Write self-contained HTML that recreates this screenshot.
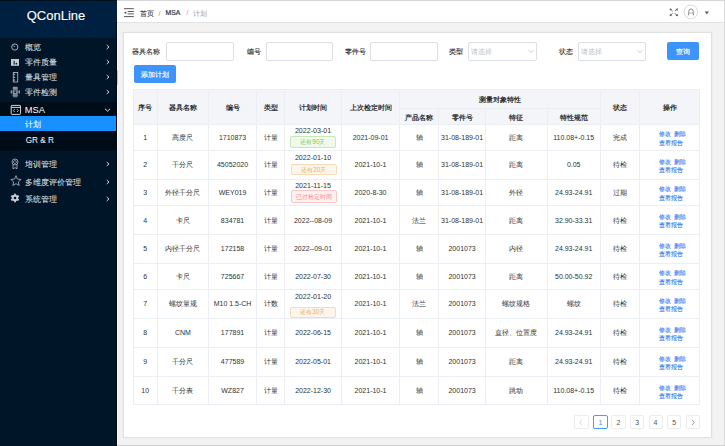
<!DOCTYPE html><html><head><meta charset="utf-8"><title>QConLine</title><style>
html,body{margin:0;padding:0;}
body{width:725px;height:446px;overflow:hidden;position:relative;background:#f2f2f2;font-family:"Liberation Sans", sans-serif;}
</style></head><body>
<div style="position:absolute;left:0px;top:0px;width:117px;height:446px;background:#011529;"></div>
<div style="position:absolute;left:0px;top:0px;width:117px;height:37.5px;background:#002041;"></div>
<div style="position:absolute;left:-94px;top:8.7px;width:300px;text-align:center;font-size:13.0px;line-height:13.0px;color:#ffffff;font-weight:normal;white-space:nowrap;letter-spacing:0px;-webkit-text-stroke:0.12px #fff;">QConLine</div>
<div style="position:absolute;left:24.6px;top:44.4px;font-size:8.1px;line-height:8.1px;color:#d3d7dc;font-weight:normal;white-space:nowrap;-webkit-text-stroke:0.1px #d3d7dc">概览</div>
<svg style="position:absolute;left:105px;top:44.3px" width="6" height="6" viewBox="0 0 6 6"><path d="M1.7 1 L4 3 L1.7 5" fill="none" stroke="#d3d7dc" stroke-width="0.95"/></svg>
<div style="position:absolute;left:24.6px;top:59.4px;font-size:8.1px;line-height:8.1px;color:#d3d7dc;font-weight:normal;white-space:nowrap;-webkit-text-stroke:0.1px #d3d7dc">零件质量</div>
<svg style="position:absolute;left:105px;top:59.3px" width="6" height="6" viewBox="0 0 6 6"><path d="M1.7 1 L4 3 L1.7 5" fill="none" stroke="#d3d7dc" stroke-width="0.95"/></svg>
<div style="position:absolute;left:24.6px;top:74.00000000000001px;font-size:8.1px;line-height:8.1px;color:#d3d7dc;font-weight:normal;white-space:nowrap;-webkit-text-stroke:0.1px #d3d7dc">量具管理</div>
<svg style="position:absolute;left:105px;top:73.9px" width="6" height="6" viewBox="0 0 6 6"><path d="M1.7 1 L4 3 L1.7 5" fill="none" stroke="#d3d7dc" stroke-width="0.95"/></svg>
<div style="position:absolute;left:24.6px;top:89.2px;font-size:8.1px;line-height:8.1px;color:#d3d7dc;font-weight:normal;white-space:nowrap;-webkit-text-stroke:0.1px #d3d7dc">零件检测</div>
<svg style="position:absolute;left:105px;top:89.1px" width="6" height="6" viewBox="0 0 6 6"><path d="M1.7 1 L4 3 L1.7 5" fill="none" stroke="#d3d7dc" stroke-width="0.95"/></svg>
<div style="position:absolute;left:0px;top:101.8px;width:117px;height:49.5px;background:#000c17;"></div>
<div style="position:absolute;left:24.8px;top:105.74999999999999px;font-size:9.3px;line-height:9.3px;color:#ffffff;font-weight:normal;white-space:nowrap;">MSA</div>
<svg style="position:absolute;left:104px;top:107px" width="7" height="6" viewBox="0 0 7 6"><path d="M1 1.8 L3.5 4.2 L6 1.8" fill="none" stroke="#ffffff" stroke-width="0.9"/></svg>
<div style="position:absolute;left:0px;top:116px;width:117px;height:14.6px;background:#1890ff;"></div>
<div style="position:absolute;left:24.6px;top:121.30000000000001px;font-size:8.1px;line-height:8.1px;color:#ffffff;font-weight:normal;white-space:nowrap;-webkit-text-stroke:0.08px #fff">计划</div>
<div style="position:absolute;left:25.7px;top:136.5px;font-size:8.2px;line-height:8.2px;color:#ffffff;font-weight:normal;white-space:nowrap;">GR &amp; R</div>
<div style="position:absolute;left:24.8px;top:161.1px;font-size:8.1px;line-height:8.1px;color:#d3d7dc;font-weight:normal;white-space:nowrap;-webkit-text-stroke:0.1px #d3d7dc">培训管理</div>
<svg style="position:absolute;left:105px;top:161.2px" width="6" height="6" viewBox="0 0 6 6"><path d="M1.7 1 L4 3 L1.7 5" fill="none" stroke="#d3d7dc" stroke-width="0.95"/></svg>
<div style="position:absolute;left:24.8px;top:178.5px;font-size:8.1px;line-height:8.1px;color:#d3d7dc;font-weight:normal;white-space:nowrap;-webkit-text-stroke:0.1px #d3d7dc">多维度评价管理</div>
<svg style="position:absolute;left:105px;top:178.6px" width="6" height="6" viewBox="0 0 6 6"><path d="M1.7 1 L4 3 L1.7 5" fill="none" stroke="#d3d7dc" stroke-width="0.95"/></svg>
<div style="position:absolute;left:24.8px;top:195.5px;font-size:8.1px;line-height:8.1px;color:#d3d7dc;font-weight:normal;white-space:nowrap;-webkit-text-stroke:0.1px #d3d7dc">系统管理</div>
<svg style="position:absolute;left:105px;top:195.6px" width="6" height="6" viewBox="0 0 6 6"><path d="M1.7 1 L4 3 L1.7 5" fill="none" stroke="#d3d7dc" stroke-width="0.95"/></svg>
<svg style="position:absolute;left:10px;top:42px" width="10" height="10" viewBox="0 0 10 10"><circle cx="4.8" cy="5" r="3.1" fill="none" stroke="#b8bec6" stroke-width="0.9"/><path d="M4.8 5 L3.2 3.4" stroke="#b8bec6" stroke-width="0.9"/></svg>
<svg style="position:absolute;left:11px;top:58.8px" width="8" height="7" viewBox="0 0 8 7"><rect x="0" y="0" width="8" height="6.8" fill="#c6cbd2"/><path d="M2.6 1.6 Q3.8 1.2 3.9 2.6 L4 5.6 H2.2 Z" fill="#4a5360"/><circle cx="5.4" cy="4.7" r="0.9" fill="#1c2430"/></svg>
<svg style="position:absolute;left:12px;top:71px" width="7" height="12" viewBox="0 0 7 12"><rect x="1.3" y="1.5" width="4.4" height="9.5" fill="none" stroke="#aab1ba" stroke-width="0.9"/><path d="M1.7 2.2 L3.4 3.3 L1.7 4.4 Z M1.7 5.1 L3.4 6.2 L1.7 7.3 Z M1.7 8 L3.4 9.1 L1.7 10.2 Z" fill="#aab1ba"/></svg>
<svg style="position:absolute;left:10px;top:86px" width="11" height="12" viewBox="0 0 11 12"><g fill="#8a939e"><rect x="2.7" y="0.8" width="5" height="2.6" rx="0.6"/><rect x="2.7" y="3.4" width="5" height="5.4"/><rect x="0.6" y="4.2" width="1.6" height="3.2" rx="0.5"/><rect x="8.4" y="4.2" width="1.6" height="3.2" rx="0.5"/><rect x="2.5" y="8.9" width="5.4" height="1" /><rect x="3" y="10.2" width="4.5" height="1" /></g><circle cx="5.2" cy="6.2" r="0.9" fill="#011529"/><rect x="3.7" y="4" width="3" height="0.7" fill="#3b4552"/></svg>
<svg style="position:absolute;left:10px;top:104px" width="12" height="12" viewBox="0 0 12 12"><rect x="1.2" y="1.4" width="9.3" height="9.0" rx="0.6" fill="none" stroke="#e6e6e6" stroke-width="0.9"/><path d="M1.2 3.4 H10.5" stroke="#e6e6e6" stroke-width="0.9"/><path d="M4.7 5.2 L3.4 6.6 L4.7 8 M7 5.2 L8.3 6.6 L7 8" fill="none" stroke="#e6e6e6" stroke-width="0.8"/></svg>
<svg style="position:absolute;left:11px;top:158px" width="8" height="12" viewBox="0 0 8 12"><circle cx="4" cy="4" r="3" fill="none" stroke="#b8bec6" stroke-width="0.8"/><circle cx="4" cy="4" r="1.5" fill="none" stroke="#b8bec6" stroke-width="0.6"/><path d="M2 6.5 V10.8 L4 9.6 L6 10.8 V6.5" fill="none" stroke="#b8bec6" stroke-width="0.8"/></svg>
<svg style="position:absolute;left:9.7px;top:175.3px" width="12" height="12" viewBox="0 0 12 12"><path d="M6.00 0.70 L7.47 4.08 L11.14 4.43 L8.38 6.87 L9.17 10.47 L6.00 8.60 L2.83 10.47 L3.62 6.87 L0.86 4.43 L4.53 4.08 Z" fill="none" stroke="#b8bec6" stroke-width="0.8" stroke-linejoin="round"/></svg>
<svg style="position:absolute;left:10px;top:193px" width="10" height="10" viewBox="0 0 10 10"><g fill="#c8cdd3"><circle cx="5" cy="5" r="3.2"/><rect x="4.1" y="0.7" width="1.8" height="8.6"/><rect x="4.1" y="0.7" width="1.8" height="8.6" transform="rotate(60 5 5)"/><rect x="4.1" y="0.7" width="1.8" height="8.6" transform="rotate(120 5 5)"/></g><circle cx="5" cy="5" r="1.3" fill="#011529"/></svg>
<div style="position:absolute;left:116px;top:22px;width:1px;height:424px;background:#000a16;"></div>
<div style="position:absolute;left:117px;top:22px;width:1px;height:424px;background:#fafafa;"></div>
<div style="position:absolute;left:117px;top:69.8px;width:1.2px;height:14.8px;background:#9cd3ff;"></div>
<div style="position:absolute;left:117px;top:0px;width:608px;height:22px;background:#ffffff;border-bottom:1px solid #e2e2e2;box-sizing:border-box;height:23px;"></div>
<svg style="position:absolute;left:123px;top:7px" width="12" height="11" viewBox="0 0 12 11"><g stroke="#444" stroke-width="0.9"><path d="M1 1.7 H10.8"/><path d="M4.7 4.5 H10.8"/><path d="M4.7 6.9 H10.8"/><path d="M1 9.6 H10.8"/></g><path d="M1 5.7 L3.3 4.4 V7 Z" fill="#444"/></svg>
<div style="position:absolute;left:140px;top:9.65px;font-size:7.3px;line-height:7.3px;color:#303133;font-weight:normal;white-space:nowrap;-webkit-text-stroke:0.1px #303133">首页</div>
<div style="position:absolute;left:158.2px;top:9.75px;font-size:8px;line-height:8px;color:#999;font-weight:normal;white-space:nowrap;">/</div>
<div style="position:absolute;left:165.5px;top:10.05px;font-size:6.8px;line-height:6.8px;color:#303133;font-weight:normal;white-space:nowrap;-webkit-text-stroke:0.2px #303133">MSA</div>
<div style="position:absolute;left:186.3px;top:9.35px;font-size:8px;line-height:8px;color:#aaa;font-weight:normal;white-space:nowrap;">/</div>
<div style="position:absolute;left:192.6px;top:9.65px;font-size:7.3px;line-height:7.3px;color:#999;font-weight:normal;white-space:nowrap;">计划</div>
<svg style="position:absolute;left:667px;top:6px" width="14" height="12" viewBox="0 0 14 12"><g stroke="#5a5a5a" stroke-width="0.9" fill="none" stroke-linecap="round"><path d="M3.3 3.1 L5.4 4.9"/><path d="M10.2 3.1 L8.2 4.9"/><path d="M3.4 9.6 L5.4 7.6"/><path d="M10.1 9.5 L8.2 7.6"/></g><g fill="#5a5a5a"><path d="M2.6 2.5 L5 2.9 L3 4.8 Z"/><path d="M10.9 2.5 L8.5 2.9 L10.5 4.8 Z"/><path d="M2.6 10.2 L3 7.8 L5 9.8 Z"/><path d="M10.9 10.2 L10.5 7.8 L8.5 9.8 Z"/></g></svg>
<svg style="position:absolute;left:683px;top:4px" width="16" height="16" viewBox="0 0 16 16"><circle cx="7.9" cy="7.9" r="6.8" fill="#fff" stroke="#c9c9c9" stroke-width="0.7"/><path d="M5.3 11.4 L5.8 9.1 V7.2 A2.2 2.2 0 0 1 10.2 7.2 V9.1 L10.7 11.4" fill="none" stroke="#666" stroke-width="0.75"/><path d="M5.8 9.1 H10.2" stroke="#888" stroke-width="0.6"/></svg>
<svg style="position:absolute;left:704px;top:10.5px" width="6" height="4" viewBox="0 0 6 4"><path d="M0.7 0.6 H5 L2.85 3.3 Z" fill="#555"/></svg>
<div style="position:absolute;left:117px;top:0px;width:608px;height:1px;background:#d6d6d6;"></div>
<div style="position:absolute;left:0px;top:0px;width:117px;height:1px;background:#000d1a;"></div>
<div style="position:absolute;left:724px;top:0px;width:1px;height:446px;background:#dadada;"></div>
<div style="position:absolute;left:117px;top:445px;width:608px;height:1px;background:#d0d0d0;"></div>
<div style="position:absolute;left:123px;top:32px;width:588.5px;height:405.5px;background:#fff;border:1px solid #e0e0e0;box-sizing:border-box;box-shadow:0 0 1px rgba(0,0,0,0.08);"></div>
<div style="position:absolute;left:132.4px;top:48.2px;font-size:7px;line-height:7px;color:#303133;font-weight:normal;white-space:nowrap;-webkit-text-stroke:0.12px #303133">器具名称</div>
<div style="position:absolute;left:166px;top:42.4px;width:68.2px;height:18.2px;border:1px solid #dcdfe6;border-radius:2px;box-sizing:border-box;background:#fff;"></div>
<div style="position:absolute;left:246.8px;top:48.2px;font-size:7px;line-height:7px;color:#303133;font-weight:normal;white-space:nowrap;-webkit-text-stroke:0.12px #303133">编号</div>
<div style="position:absolute;left:265.5px;top:42.4px;width:67.8px;height:18.2px;border:1px solid #dcdfe6;border-radius:2px;box-sizing:border-box;background:#fff;"></div>
<div style="position:absolute;left:345.4px;top:48.2px;font-size:7px;line-height:7px;color:#303133;font-weight:normal;white-space:nowrap;-webkit-text-stroke:0.12px #303133">零件号</div>
<div style="position:absolute;left:370.4px;top:42.4px;width:68px;height:18.2px;border:1px solid #dcdfe6;border-radius:2px;box-sizing:border-box;background:#fff;"></div>
<div style="position:absolute;left:448.6px;top:48.2px;font-size:7px;line-height:7px;color:#303133;font-weight:normal;white-space:nowrap;-webkit-text-stroke:0.12px #303133">类型</div>
<div style="position:absolute;left:468.2px;top:42.4px;width:68.5px;height:18.2px;border:1px solid #dcdfe6;border-radius:2px;box-sizing:border-box;background:#fff;"></div>
<div style="position:absolute;left:471.2px;top:48.0px;font-size:7px;line-height:7px;color:#b8bcc4;font-weight:normal;white-space:nowrap;">请选择</div>
<svg style="position:absolute;left:527.7px;top:49px" width="6" height="5" viewBox="0 0 6 5"><path d="M0.6 1 L3 3.6 L5.4 1" fill="none" stroke="#b8bcc4" stroke-width="0.7"/></svg>
<div style="position:absolute;left:558.8px;top:48.2px;font-size:7px;line-height:7px;color:#303133;font-weight:normal;white-space:nowrap;-webkit-text-stroke:0.12px #303133">状态</div>
<div style="position:absolute;left:578.2px;top:42.4px;width:68.2px;height:18.2px;border:1px solid #dcdfe6;border-radius:2px;box-sizing:border-box;background:#fff;"></div>
<div style="position:absolute;left:581.2px;top:48.0px;font-size:7px;line-height:7px;color:#b8bcc4;font-weight:normal;white-space:nowrap;">请选择</div>
<svg style="position:absolute;left:637.4000000000001px;top:49px" width="6" height="5" viewBox="0 0 6 5"><path d="M0.6 1 L3 3.6 L5.4 1" fill="none" stroke="#b8bcc4" stroke-width="0.7"/></svg>
<div style="position:absolute;left:667px;top:42px;width:32px;height:18px;background:#3d95fc;border-radius:2px;"></div>
<div style="position:absolute;left:533px;top:47.5px;width:300px;text-align:center;font-size:7px;line-height:7px;color:#fff;font-weight:normal;white-space:nowrap;-webkit-text-stroke:0.15px #fff">查询</div>
<div style="position:absolute;left:133.8px;top:65.2px;width:42.4px;height:18.3px;background:#3d95fc;border-radius:2px;"></div>
<div style="position:absolute;left:4.599999999999994px;top:70.9px;width:300px;text-align:center;font-size:7px;line-height:7px;color:#fff;font-weight:normal;white-space:nowrap;-webkit-text-stroke:0.15px #fff">添加计划</div>
<div style="position:absolute;left:133.2px;top:89.2px;width:567.2px;height:35.099999999999994px;background:#f3f5f9;"></div>
<div style="position:absolute;left:133.2px;top:89.2px;width:567.2px;height:315.8px;border:1px solid #ebeef5;box-sizing:border-box;"></div>
<div style="position:absolute;left:133.2px;top:123.8px;width:567.2px;height:1px;background:#ebeef5;"></div>
<div style="position:absolute;left:133.2px;top:150.3px;width:567.2px;height:1px;background:#ebeef5;"></div>
<div style="position:absolute;left:133.2px;top:178.5px;width:567.2px;height:1px;background:#ebeef5;"></div>
<div style="position:absolute;left:133.2px;top:205.0px;width:567.2px;height:1px;background:#ebeef5;"></div>
<div style="position:absolute;left:133.2px;top:234.1px;width:567.2px;height:1px;background:#ebeef5;"></div>
<div style="position:absolute;left:133.2px;top:262.6px;width:567.2px;height:1px;background:#ebeef5;"></div>
<div style="position:absolute;left:133.2px;top:288.6px;width:567.2px;height:1px;background:#ebeef5;"></div>
<div style="position:absolute;left:133.2px;top:317.7px;width:567.2px;height:1px;background:#ebeef5;"></div>
<div style="position:absolute;left:133.2px;top:346.9px;width:567.2px;height:1px;background:#ebeef5;"></div>
<div style="position:absolute;left:133.2px;top:376.0px;width:567.2px;height:1px;background:#ebeef5;"></div>
<div style="position:absolute;left:399.6px;top:107.9px;width:200.39999999999998px;height:1px;background:#ebeef5;"></div>
<div style="position:absolute;left:156.8px;top:89.2px;width:1px;height:315.8px;background:#ebeef5;"></div>
<div style="position:absolute;left:208.1px;top:89.2px;width:1px;height:315.8px;background:#ebeef5;"></div>
<div style="position:absolute;left:256.0px;top:89.2px;width:1px;height:315.8px;background:#ebeef5;"></div>
<div style="position:absolute;left:284.1px;top:89.2px;width:1px;height:315.8px;background:#ebeef5;"></div>
<div style="position:absolute;left:341.0px;top:89.2px;width:1px;height:315.8px;background:#ebeef5;"></div>
<div style="position:absolute;left:399.1px;top:89.2px;width:1px;height:315.8px;background:#ebeef5;"></div>
<div style="position:absolute;left:438.3px;top:108.4px;width:1px;height:296.6px;background:#ebeef5;"></div>
<div style="position:absolute;left:484.9px;top:108.4px;width:1px;height:296.6px;background:#ebeef5;"></div>
<div style="position:absolute;left:546.9px;top:108.4px;width:1px;height:296.6px;background:#ebeef5;"></div>
<div style="position:absolute;left:599.5px;top:89.2px;width:1px;height:315.8px;background:#ebeef5;"></div>
<div style="position:absolute;left:638.9px;top:89.2px;width:1px;height:315.8px;background:#ebeef5;"></div>
<div style="position:absolute;left:-4.75px;top:104.25px;width:300px;text-align:center;font-size:7px;line-height:7px;color:#303133;font-weight:bold;white-space:nowrap;">序号</div>
<div style="position:absolute;left:32.94999999999999px;top:104.25px;width:300px;text-align:center;font-size:7px;line-height:7px;color:#303133;font-weight:bold;white-space:nowrap;">器具名称</div>
<div style="position:absolute;left:82.55000000000001px;top:104.25px;width:300px;text-align:center;font-size:7px;line-height:7px;color:#303133;font-weight:bold;white-space:nowrap;">编号</div>
<div style="position:absolute;left:120.55000000000001px;top:104.25px;width:300px;text-align:center;font-size:7px;line-height:7px;color:#303133;font-weight:bold;white-space:nowrap;">类型</div>
<div style="position:absolute;left:163.05px;top:104.25px;width:300px;text-align:center;font-size:7px;line-height:7px;color:#303133;font-weight:bold;white-space:nowrap;">计划时间</div>
<div style="position:absolute;left:220.55px;top:104.25px;width:300px;text-align:center;font-size:7px;line-height:7px;color:#303133;font-weight:bold;white-space:nowrap;">上次检定时间</div>
<div style="position:absolute;left:349.8px;top:96.30000000000001px;width:300px;text-align:center;font-size:7px;line-height:7px;color:#303133;font-weight:bold;white-space:nowrap;">测量对象特性</div>
<div style="position:absolute;left:269.20000000000005px;top:113.85px;width:300px;text-align:center;font-size:7px;line-height:7px;color:#303133;font-weight:bold;white-space:nowrap;">产品名称</div>
<div style="position:absolute;left:312.1px;top:113.85px;width:300px;text-align:center;font-size:7px;line-height:7px;color:#303133;font-weight:bold;white-space:nowrap;">零件号</div>
<div style="position:absolute;left:366.4px;top:113.85px;width:300px;text-align:center;font-size:7px;line-height:7px;color:#303133;font-weight:bold;white-space:nowrap;">特征</div>
<div style="position:absolute;left:423.70000000000005px;top:113.85px;width:300px;text-align:center;font-size:7px;line-height:7px;color:#303133;font-weight:bold;white-space:nowrap;">特性规范</div>
<div style="position:absolute;left:469.70000000000005px;top:104.25px;width:300px;text-align:center;font-size:7px;line-height:7px;color:#303133;font-weight:bold;white-space:nowrap;">状态</div>
<div style="position:absolute;left:519.9px;top:104.25px;width:300px;text-align:center;font-size:7px;line-height:7px;color:#303133;font-weight:bold;white-space:nowrap;">操作</div>
<div style="position:absolute;left:-4.75px;top:134.05px;width:300px;text-align:center;font-size:7px;line-height:7px;color:#303133;font-weight:normal;white-space:nowrap;">1</div>
<div style="position:absolute;left:32.94999999999999px;top:134.05px;width:300px;text-align:center;font-size:7px;line-height:7px;color:#303133;font-weight:normal;white-space:nowrap;">高度尺</div>
<div style="position:absolute;left:82.55000000000001px;top:134.05px;width:300px;text-align:center;font-size:7px;line-height:7px;color:#303133;font-weight:normal;white-space:nowrap;">1710873</div>
<div style="position:absolute;left:120.55000000000001px;top:134.05px;width:300px;text-align:center;font-size:7px;line-height:7px;color:#303133;font-weight:normal;white-space:nowrap;">计量</div>
<div style="position:absolute;left:220.55px;top:134.05px;width:300px;text-align:center;font-size:7px;line-height:7px;color:#303133;font-weight:normal;white-space:nowrap;">2021-09-01</div>
<div style="position:absolute;left:269.20000000000005px;top:134.05px;width:300px;text-align:center;font-size:7px;line-height:7px;color:#303133;font-weight:normal;white-space:nowrap;">轴</div>
<div style="position:absolute;left:312.1px;top:134.05px;width:300px;text-align:center;font-size:7px;line-height:7px;color:#303133;font-weight:normal;white-space:nowrap;">31-08-189-01</div>
<div style="position:absolute;left:366.4px;top:134.05px;width:300px;text-align:center;font-size:7px;line-height:7px;color:#303133;font-weight:normal;white-space:nowrap;">距离</div>
<div style="position:absolute;left:423.70000000000005px;top:134.05px;width:300px;text-align:center;font-size:7px;line-height:7px;color:#303133;font-weight:normal;white-space:nowrap;">110.08+-0.15</div>
<div style="position:absolute;left:469.70000000000005px;top:134.05px;width:300px;text-align:center;font-size:7px;line-height:7px;color:#303133;font-weight:normal;white-space:nowrap;">完成</div>
<div style="position:absolute;left:163.05px;top:128.2px;width:300px;text-align:center;font-size:7.1px;line-height:7.1px;color:#303133;font-weight:normal;white-space:nowrap;">2022-03-01</div>
<div style="position:absolute;left:290.1px;top:136.2px;width:45.599999999999966px;height:11.5px;background:#f0f9eb;border:1px solid #c6e8b4;border-radius:2px;box-sizing:border-box;"></div>
<div style="position:absolute;left:162.89999999999998px;top:138.95px;width:300px;text-align:center;font-size:6.4px;line-height:6.4px;color:#7bc95a;font-weight:normal;white-space:nowrap;">还有90天</div>
<div style="position:absolute;left:522.3px;top:131.45000000000002px;width:300px;text-align:center;font-size:6.4px;line-height:6.4px;color:#3a7cf0;font-weight:normal;white-space:nowrap;-webkit-text-stroke:0.12px #3a7cf0">修改<span style="display:inline-block;width:3.4px"></span>删除</div>
<div style="position:absolute;left:521.45px;top:139.95000000000002px;width:300px;text-align:center;font-size:6.4px;line-height:6.4px;color:#3a7cf0;font-weight:normal;white-space:nowrap;-webkit-text-stroke:0.12px #3a7cf0">查看报告</div>
<div style="position:absolute;left:-4.75px;top:161.4px;width:300px;text-align:center;font-size:7px;line-height:7px;color:#303133;font-weight:normal;white-space:nowrap;">2</div>
<div style="position:absolute;left:32.94999999999999px;top:161.4px;width:300px;text-align:center;font-size:7px;line-height:7px;color:#303133;font-weight:normal;white-space:nowrap;">千分尺</div>
<div style="position:absolute;left:82.55000000000001px;top:161.4px;width:300px;text-align:center;font-size:7px;line-height:7px;color:#303133;font-weight:normal;white-space:nowrap;">45052020</div>
<div style="position:absolute;left:120.55000000000001px;top:161.4px;width:300px;text-align:center;font-size:7px;line-height:7px;color:#303133;font-weight:normal;white-space:nowrap;">计量</div>
<div style="position:absolute;left:220.55px;top:161.4px;width:300px;text-align:center;font-size:7px;line-height:7px;color:#303133;font-weight:normal;white-space:nowrap;">2021-10-1</div>
<div style="position:absolute;left:269.20000000000005px;top:161.4px;width:300px;text-align:center;font-size:7px;line-height:7px;color:#303133;font-weight:normal;white-space:nowrap;">轴</div>
<div style="position:absolute;left:312.1px;top:161.4px;width:300px;text-align:center;font-size:7px;line-height:7px;color:#303133;font-weight:normal;white-space:nowrap;">31-08-189-01</div>
<div style="position:absolute;left:366.4px;top:161.4px;width:300px;text-align:center;font-size:7px;line-height:7px;color:#303133;font-weight:normal;white-space:nowrap;">距离</div>
<div style="position:absolute;left:423.70000000000005px;top:161.4px;width:300px;text-align:center;font-size:7px;line-height:7px;color:#303133;font-weight:normal;white-space:nowrap;">0.05</div>
<div style="position:absolute;left:469.70000000000005px;top:161.4px;width:300px;text-align:center;font-size:7px;line-height:7px;color:#303133;font-weight:normal;white-space:nowrap;">待检</div>
<div style="position:absolute;left:163.05px;top:154.74999999999997px;width:300px;text-align:center;font-size:7.1px;line-height:7.1px;color:#303133;font-weight:normal;white-space:nowrap;">2022-01-10</div>
<div style="position:absolute;left:291px;top:164.2px;width:45.69999999999999px;height:10.600000000000023px;background:#fdf6ec;border:1px solid #f5dcb6;border-radius:2px;box-sizing:border-box;"></div>
<div style="position:absolute;left:163.85000000000002px;top:166.5px;width:300px;text-align:center;font-size:6.4px;line-height:6.4px;color:#eaae5a;font-weight:normal;white-space:nowrap;">还有20天</div>
<div style="position:absolute;left:522.3px;top:158.8px;width:300px;text-align:center;font-size:6.4px;line-height:6.4px;color:#3a7cf0;font-weight:normal;white-space:nowrap;-webkit-text-stroke:0.12px #3a7cf0">修改<span style="display:inline-block;width:3.4px"></span>删除</div>
<div style="position:absolute;left:521.45px;top:167.3px;width:300px;text-align:center;font-size:6.4px;line-height:6.4px;color:#3a7cf0;font-weight:normal;white-space:nowrap;-webkit-text-stroke:0.12px #3a7cf0">查看报告</div>
<div style="position:absolute;left:-4.75px;top:188.75px;width:300px;text-align:center;font-size:7px;line-height:7px;color:#303133;font-weight:normal;white-space:nowrap;">3</div>
<div style="position:absolute;left:32.94999999999999px;top:188.75px;width:300px;text-align:center;font-size:7px;line-height:7px;color:#303133;font-weight:normal;white-space:nowrap;">外径千分尺</div>
<div style="position:absolute;left:82.55000000000001px;top:188.75px;width:300px;text-align:center;font-size:7px;line-height:7px;color:#303133;font-weight:normal;white-space:nowrap;">WEY019</div>
<div style="position:absolute;left:120.55000000000001px;top:188.75px;width:300px;text-align:center;font-size:7px;line-height:7px;color:#303133;font-weight:normal;white-space:nowrap;">计量</div>
<div style="position:absolute;left:220.55px;top:188.75px;width:300px;text-align:center;font-size:7px;line-height:7px;color:#303133;font-weight:normal;white-space:nowrap;">2020-8-30</div>
<div style="position:absolute;left:269.20000000000005px;top:188.75px;width:300px;text-align:center;font-size:7px;line-height:7px;color:#303133;font-weight:normal;white-space:nowrap;">轴</div>
<div style="position:absolute;left:312.1px;top:188.75px;width:300px;text-align:center;font-size:7px;line-height:7px;color:#303133;font-weight:normal;white-space:nowrap;">31-08-189-01</div>
<div style="position:absolute;left:366.4px;top:188.75px;width:300px;text-align:center;font-size:7px;line-height:7px;color:#303133;font-weight:normal;white-space:nowrap;">外径</div>
<div style="position:absolute;left:423.70000000000005px;top:188.75px;width:300px;text-align:center;font-size:7px;line-height:7px;color:#303133;font-weight:normal;white-space:nowrap;">24.93-24.91</div>
<div style="position:absolute;left:469.70000000000005px;top:188.75px;width:300px;text-align:center;font-size:7px;line-height:7px;color:#303133;font-weight:normal;white-space:nowrap;">过期</div>
<div style="position:absolute;left:163.05px;top:182.84999999999997px;width:300px;text-align:center;font-size:7.1px;line-height:7.1px;color:#303133;font-weight:normal;white-space:nowrap;">2021-11-15</div>
<div style="position:absolute;left:291px;top:190.3px;width:45.69999999999999px;height:12.5px;background:#fef0f0;border:1px solid #fac8c8;border-radius:2px;box-sizing:border-box;"></div>
<div style="position:absolute;left:163.85000000000002px;top:193.55px;width:300px;text-align:center;font-size:6.4px;line-height:6.4px;color:#f48a8a;font-weight:normal;white-space:nowrap;">已过检定时间</div>
<div style="position:absolute;left:522.3px;top:186.15px;width:300px;text-align:center;font-size:6.4px;line-height:6.4px;color:#3a7cf0;font-weight:normal;white-space:nowrap;-webkit-text-stroke:0.12px #3a7cf0">修改<span style="display:inline-block;width:3.4px"></span>删除</div>
<div style="position:absolute;left:521.45px;top:194.65px;width:300px;text-align:center;font-size:6.4px;line-height:6.4px;color:#3a7cf0;font-weight:normal;white-space:nowrap;-webkit-text-stroke:0.12px #3a7cf0">查看报告</div>
<div style="position:absolute;left:-4.75px;top:216.55px;width:300px;text-align:center;font-size:7px;line-height:7px;color:#303133;font-weight:normal;white-space:nowrap;">4</div>
<div style="position:absolute;left:32.94999999999999px;top:216.55px;width:300px;text-align:center;font-size:7px;line-height:7px;color:#303133;font-weight:normal;white-space:nowrap;">卡尺</div>
<div style="position:absolute;left:82.55000000000001px;top:216.55px;width:300px;text-align:center;font-size:7px;line-height:7px;color:#303133;font-weight:normal;white-space:nowrap;">834781</div>
<div style="position:absolute;left:120.55000000000001px;top:216.55px;width:300px;text-align:center;font-size:7px;line-height:7px;color:#303133;font-weight:normal;white-space:nowrap;">计量</div>
<div style="position:absolute;left:220.55px;top:216.55px;width:300px;text-align:center;font-size:7px;line-height:7px;color:#303133;font-weight:normal;white-space:nowrap;">2021-10-1</div>
<div style="position:absolute;left:269.20000000000005px;top:216.55px;width:300px;text-align:center;font-size:7px;line-height:7px;color:#303133;font-weight:normal;white-space:nowrap;">法兰</div>
<div style="position:absolute;left:312.1px;top:216.55px;width:300px;text-align:center;font-size:7px;line-height:7px;color:#303133;font-weight:normal;white-space:nowrap;">31-08-189-01</div>
<div style="position:absolute;left:366.4px;top:216.55px;width:300px;text-align:center;font-size:7px;line-height:7px;color:#303133;font-weight:normal;white-space:nowrap;">距离</div>
<div style="position:absolute;left:423.70000000000005px;top:216.55px;width:300px;text-align:center;font-size:7px;line-height:7px;color:#303133;font-weight:normal;white-space:nowrap;">32.90-33.31</div>
<div style="position:absolute;left:469.70000000000005px;top:216.55px;width:300px;text-align:center;font-size:7px;line-height:7px;color:#303133;font-weight:normal;white-space:nowrap;">待检</div>
<div style="position:absolute;left:163.05px;top:216.55px;width:300px;text-align:center;font-size:7px;line-height:7px;color:#303133;font-weight:normal;white-space:nowrap;">2022--08-09</div>
<div style="position:absolute;left:522.3px;top:213.95000000000002px;width:300px;text-align:center;font-size:6.4px;line-height:6.4px;color:#3a7cf0;font-weight:normal;white-space:nowrap;-webkit-text-stroke:0.12px #3a7cf0">修改<span style="display:inline-block;width:3.4px"></span>删除</div>
<div style="position:absolute;left:521.45px;top:222.45000000000002px;width:300px;text-align:center;font-size:6.4px;line-height:6.4px;color:#3a7cf0;font-weight:normal;white-space:nowrap;-webkit-text-stroke:0.12px #3a7cf0">查看报告</div>
<div style="position:absolute;left:-4.75px;top:245.35000000000002px;width:300px;text-align:center;font-size:7px;line-height:7px;color:#303133;font-weight:normal;white-space:nowrap;">5</div>
<div style="position:absolute;left:32.94999999999999px;top:245.35000000000002px;width:300px;text-align:center;font-size:7px;line-height:7px;color:#303133;font-weight:normal;white-space:nowrap;">内径千分尺</div>
<div style="position:absolute;left:82.55000000000001px;top:245.35000000000002px;width:300px;text-align:center;font-size:7px;line-height:7px;color:#303133;font-weight:normal;white-space:nowrap;">172158</div>
<div style="position:absolute;left:120.55000000000001px;top:245.35000000000002px;width:300px;text-align:center;font-size:7px;line-height:7px;color:#303133;font-weight:normal;white-space:nowrap;">计量</div>
<div style="position:absolute;left:220.55px;top:245.35000000000002px;width:300px;text-align:center;font-size:7px;line-height:7px;color:#303133;font-weight:normal;white-space:nowrap;">2021-10-1</div>
<div style="position:absolute;left:269.20000000000005px;top:245.35000000000002px;width:300px;text-align:center;font-size:7px;line-height:7px;color:#303133;font-weight:normal;white-space:nowrap;">轴</div>
<div style="position:absolute;left:312.1px;top:245.35000000000002px;width:300px;text-align:center;font-size:7px;line-height:7px;color:#303133;font-weight:normal;white-space:nowrap;">2001073</div>
<div style="position:absolute;left:366.4px;top:245.35000000000002px;width:300px;text-align:center;font-size:7px;line-height:7px;color:#303133;font-weight:normal;white-space:nowrap;">内径</div>
<div style="position:absolute;left:423.70000000000005px;top:245.35000000000002px;width:300px;text-align:center;font-size:7px;line-height:7px;color:#303133;font-weight:normal;white-space:nowrap;">24.93-24.91</div>
<div style="position:absolute;left:469.70000000000005px;top:245.35000000000002px;width:300px;text-align:center;font-size:7px;line-height:7px;color:#303133;font-weight:normal;white-space:nowrap;">待检</div>
<div style="position:absolute;left:163.05px;top:245.35000000000002px;width:300px;text-align:center;font-size:7px;line-height:7px;color:#303133;font-weight:normal;white-space:nowrap;">2022--09-01</div>
<div style="position:absolute;left:522.3px;top:242.75000000000003px;width:300px;text-align:center;font-size:6.4px;line-height:6.4px;color:#3a7cf0;font-weight:normal;white-space:nowrap;-webkit-text-stroke:0.12px #3a7cf0">修改<span style="display:inline-block;width:3.4px"></span>删除</div>
<div style="position:absolute;left:521.45px;top:251.25000000000003px;width:300px;text-align:center;font-size:6.4px;line-height:6.4px;color:#3a7cf0;font-weight:normal;white-space:nowrap;-webkit-text-stroke:0.12px #3a7cf0">查看报告</div>
<div style="position:absolute;left:-4.75px;top:272.6px;width:300px;text-align:center;font-size:7px;line-height:7px;color:#303133;font-weight:normal;white-space:nowrap;">6</div>
<div style="position:absolute;left:32.94999999999999px;top:272.6px;width:300px;text-align:center;font-size:7px;line-height:7px;color:#303133;font-weight:normal;white-space:nowrap;">卡尺</div>
<div style="position:absolute;left:82.55000000000001px;top:272.6px;width:300px;text-align:center;font-size:7px;line-height:7px;color:#303133;font-weight:normal;white-space:nowrap;">725667</div>
<div style="position:absolute;left:120.55000000000001px;top:272.6px;width:300px;text-align:center;font-size:7px;line-height:7px;color:#303133;font-weight:normal;white-space:nowrap;">计量</div>
<div style="position:absolute;left:220.55px;top:272.6px;width:300px;text-align:center;font-size:7px;line-height:7px;color:#303133;font-weight:normal;white-space:nowrap;">2021-10-1</div>
<div style="position:absolute;left:269.20000000000005px;top:272.6px;width:300px;text-align:center;font-size:7px;line-height:7px;color:#303133;font-weight:normal;white-space:nowrap;">轴</div>
<div style="position:absolute;left:312.1px;top:272.6px;width:300px;text-align:center;font-size:7px;line-height:7px;color:#303133;font-weight:normal;white-space:nowrap;">2001073</div>
<div style="position:absolute;left:366.4px;top:272.6px;width:300px;text-align:center;font-size:7px;line-height:7px;color:#303133;font-weight:normal;white-space:nowrap;">距离</div>
<div style="position:absolute;left:423.70000000000005px;top:272.6px;width:300px;text-align:center;font-size:7px;line-height:7px;color:#303133;font-weight:normal;white-space:nowrap;">50.00-50.92</div>
<div style="position:absolute;left:469.70000000000005px;top:272.6px;width:300px;text-align:center;font-size:7px;line-height:7px;color:#303133;font-weight:normal;white-space:nowrap;">待检</div>
<div style="position:absolute;left:163.05px;top:272.6px;width:300px;text-align:center;font-size:7px;line-height:7px;color:#303133;font-weight:normal;white-space:nowrap;">2022-07-30</div>
<div style="position:absolute;left:522.3px;top:270.00000000000006px;width:300px;text-align:center;font-size:6.4px;line-height:6.4px;color:#3a7cf0;font-weight:normal;white-space:nowrap;-webkit-text-stroke:0.12px #3a7cf0">修改<span style="display:inline-block;width:3.4px"></span>删除</div>
<div style="position:absolute;left:521.45px;top:278.50000000000006px;width:300px;text-align:center;font-size:6.4px;line-height:6.4px;color:#3a7cf0;font-weight:normal;white-space:nowrap;-webkit-text-stroke:0.12px #3a7cf0">查看报告</div>
<div style="position:absolute;left:-4.75px;top:300.15px;width:300px;text-align:center;font-size:7px;line-height:7px;color:#303133;font-weight:normal;white-space:nowrap;">7</div>
<div style="position:absolute;left:32.94999999999999px;top:300.15px;width:300px;text-align:center;font-size:7px;line-height:7px;color:#303133;font-weight:normal;white-space:nowrap;">螺纹量规</div>
<div style="position:absolute;left:82.55000000000001px;top:300.15px;width:300px;text-align:center;font-size:7px;line-height:7px;color:#303133;font-weight:normal;white-space:nowrap;">M10 1.5-CH</div>
<div style="position:absolute;left:120.55000000000001px;top:300.15px;width:300px;text-align:center;font-size:7px;line-height:7px;color:#303133;font-weight:normal;white-space:nowrap;">计数</div>
<div style="position:absolute;left:220.55px;top:300.15px;width:300px;text-align:center;font-size:7px;line-height:7px;color:#303133;font-weight:normal;white-space:nowrap;">2021-10-1</div>
<div style="position:absolute;left:269.20000000000005px;top:300.15px;width:300px;text-align:center;font-size:7px;line-height:7px;color:#303133;font-weight:normal;white-space:nowrap;">法兰</div>
<div style="position:absolute;left:312.1px;top:300.15px;width:300px;text-align:center;font-size:7px;line-height:7px;color:#303133;font-weight:normal;white-space:nowrap;">2001073</div>
<div style="position:absolute;left:366.4px;top:300.15px;width:300px;text-align:center;font-size:7px;line-height:7px;color:#303133;font-weight:normal;white-space:nowrap;">螺纹规格</div>
<div style="position:absolute;left:423.70000000000005px;top:300.15px;width:300px;text-align:center;font-size:7px;line-height:7px;color:#303133;font-weight:normal;white-space:nowrap;">螺纹</div>
<div style="position:absolute;left:469.70000000000005px;top:300.15px;width:300px;text-align:center;font-size:7px;line-height:7px;color:#303133;font-weight:normal;white-space:nowrap;">待检</div>
<div style="position:absolute;left:163.05px;top:293.65px;width:300px;text-align:center;font-size:7.1px;line-height:7.1px;color:#303133;font-weight:normal;white-space:nowrap;">2022-01-20</div>
<div style="position:absolute;left:289.9px;top:307px;width:45.80000000000001px;height:10.699999999999989px;background:#fdf6ec;border:1px solid #f5dcb6;border-radius:2px;box-sizing:border-box;"></div>
<div style="position:absolute;left:162.79999999999995px;top:309.35px;width:300px;text-align:center;font-size:6.4px;line-height:6.4px;color:#eaae5a;font-weight:normal;white-space:nowrap;">还有30天</div>
<div style="position:absolute;left:522.3px;top:297.55px;width:300px;text-align:center;font-size:6.4px;line-height:6.4px;color:#3a7cf0;font-weight:normal;white-space:nowrap;-webkit-text-stroke:0.12px #3a7cf0">修改<span style="display:inline-block;width:3.4px"></span>删除</div>
<div style="position:absolute;left:521.45px;top:306.05px;width:300px;text-align:center;font-size:6.4px;line-height:6.4px;color:#3a7cf0;font-weight:normal;white-space:nowrap;-webkit-text-stroke:0.12px #3a7cf0">查看报告</div>
<div style="position:absolute;left:-4.75px;top:329.29999999999995px;width:300px;text-align:center;font-size:7px;line-height:7px;color:#303133;font-weight:normal;white-space:nowrap;">8</div>
<div style="position:absolute;left:32.94999999999999px;top:329.29999999999995px;width:300px;text-align:center;font-size:7px;line-height:7px;color:#303133;font-weight:normal;white-space:nowrap;">CNM</div>
<div style="position:absolute;left:82.55000000000001px;top:329.29999999999995px;width:300px;text-align:center;font-size:7px;line-height:7px;color:#303133;font-weight:normal;white-space:nowrap;">177891</div>
<div style="position:absolute;left:120.55000000000001px;top:329.29999999999995px;width:300px;text-align:center;font-size:7px;line-height:7px;color:#303133;font-weight:normal;white-space:nowrap;">计量</div>
<div style="position:absolute;left:220.55px;top:329.29999999999995px;width:300px;text-align:center;font-size:7px;line-height:7px;color:#303133;font-weight:normal;white-space:nowrap;">2021-10-1</div>
<div style="position:absolute;left:269.20000000000005px;top:329.29999999999995px;width:300px;text-align:center;font-size:7px;line-height:7px;color:#303133;font-weight:normal;white-space:nowrap;">轴</div>
<div style="position:absolute;left:312.1px;top:329.29999999999995px;width:300px;text-align:center;font-size:7px;line-height:7px;color:#303133;font-weight:normal;white-space:nowrap;">2001073</div>
<div style="position:absolute;left:366.4px;top:329.29999999999995px;width:300px;text-align:center;font-size:7px;line-height:7px;color:#303133;font-weight:normal;white-space:nowrap;">直径、位置度</div>
<div style="position:absolute;left:423.70000000000005px;top:329.29999999999995px;width:300px;text-align:center;font-size:7px;line-height:7px;color:#303133;font-weight:normal;white-space:nowrap;">24.93-24.91</div>
<div style="position:absolute;left:469.70000000000005px;top:329.29999999999995px;width:300px;text-align:center;font-size:7px;line-height:7px;color:#303133;font-weight:normal;white-space:nowrap;">待检</div>
<div style="position:absolute;left:163.05px;top:329.29999999999995px;width:300px;text-align:center;font-size:7px;line-height:7px;color:#303133;font-weight:normal;white-space:nowrap;">2022-06-15</div>
<div style="position:absolute;left:522.3px;top:326.7px;width:300px;text-align:center;font-size:6.4px;line-height:6.4px;color:#3a7cf0;font-weight:normal;white-space:nowrap;-webkit-text-stroke:0.12px #3a7cf0">修改<span style="display:inline-block;width:3.4px"></span>删除</div>
<div style="position:absolute;left:521.45px;top:335.2px;width:300px;text-align:center;font-size:6.4px;line-height:6.4px;color:#3a7cf0;font-weight:normal;white-space:nowrap;-webkit-text-stroke:0.12px #3a7cf0">查看报告</div>
<div style="position:absolute;left:-4.75px;top:358.45px;width:300px;text-align:center;font-size:7px;line-height:7px;color:#303133;font-weight:normal;white-space:nowrap;">9</div>
<div style="position:absolute;left:32.94999999999999px;top:358.45px;width:300px;text-align:center;font-size:7px;line-height:7px;color:#303133;font-weight:normal;white-space:nowrap;">千分尺</div>
<div style="position:absolute;left:82.55000000000001px;top:358.45px;width:300px;text-align:center;font-size:7px;line-height:7px;color:#303133;font-weight:normal;white-space:nowrap;">477589</div>
<div style="position:absolute;left:120.55000000000001px;top:358.45px;width:300px;text-align:center;font-size:7px;line-height:7px;color:#303133;font-weight:normal;white-space:nowrap;">计量</div>
<div style="position:absolute;left:220.55px;top:358.45px;width:300px;text-align:center;font-size:7px;line-height:7px;color:#303133;font-weight:normal;white-space:nowrap;">2021-10-1</div>
<div style="position:absolute;left:269.20000000000005px;top:358.45px;width:300px;text-align:center;font-size:7px;line-height:7px;color:#303133;font-weight:normal;white-space:nowrap;">轴</div>
<div style="position:absolute;left:312.1px;top:358.45px;width:300px;text-align:center;font-size:7px;line-height:7px;color:#303133;font-weight:normal;white-space:nowrap;">2001073</div>
<div style="position:absolute;left:366.4px;top:358.45px;width:300px;text-align:center;font-size:7px;line-height:7px;color:#303133;font-weight:normal;white-space:nowrap;">距离</div>
<div style="position:absolute;left:423.70000000000005px;top:358.45px;width:300px;text-align:center;font-size:7px;line-height:7px;color:#303133;font-weight:normal;white-space:nowrap;">24.93-24.91</div>
<div style="position:absolute;left:469.70000000000005px;top:358.45px;width:300px;text-align:center;font-size:7px;line-height:7px;color:#303133;font-weight:normal;white-space:nowrap;">待检</div>
<div style="position:absolute;left:163.05px;top:358.45px;width:300px;text-align:center;font-size:7px;line-height:7px;color:#303133;font-weight:normal;white-space:nowrap;">2022-05-01</div>
<div style="position:absolute;left:522.3px;top:355.85px;width:300px;text-align:center;font-size:6.4px;line-height:6.4px;color:#3a7cf0;font-weight:normal;white-space:nowrap;-webkit-text-stroke:0.12px #3a7cf0">修改<span style="display:inline-block;width:3.4px"></span>删除</div>
<div style="position:absolute;left:521.45px;top:364.35px;width:300px;text-align:center;font-size:6.4px;line-height:6.4px;color:#3a7cf0;font-weight:normal;white-space:nowrap;-webkit-text-stroke:0.12px #3a7cf0">查看报告</div>
<div style="position:absolute;left:-4.75px;top:387.25px;width:300px;text-align:center;font-size:7px;line-height:7px;color:#303133;font-weight:normal;white-space:nowrap;">10</div>
<div style="position:absolute;left:32.94999999999999px;top:387.25px;width:300px;text-align:center;font-size:7px;line-height:7px;color:#303133;font-weight:normal;white-space:nowrap;">千分表</div>
<div style="position:absolute;left:82.55000000000001px;top:387.25px;width:300px;text-align:center;font-size:7px;line-height:7px;color:#303133;font-weight:normal;white-space:nowrap;">WZ827</div>
<div style="position:absolute;left:120.55000000000001px;top:387.25px;width:300px;text-align:center;font-size:7px;line-height:7px;color:#303133;font-weight:normal;white-space:nowrap;">计量</div>
<div style="position:absolute;left:220.55px;top:387.25px;width:300px;text-align:center;font-size:7px;line-height:7px;color:#303133;font-weight:normal;white-space:nowrap;">2021-10-1</div>
<div style="position:absolute;left:269.20000000000005px;top:387.25px;width:300px;text-align:center;font-size:7px;line-height:7px;color:#303133;font-weight:normal;white-space:nowrap;">轴</div>
<div style="position:absolute;left:312.1px;top:387.25px;width:300px;text-align:center;font-size:7px;line-height:7px;color:#303133;font-weight:normal;white-space:nowrap;">2001073</div>
<div style="position:absolute;left:366.4px;top:387.25px;width:300px;text-align:center;font-size:7px;line-height:7px;color:#303133;font-weight:normal;white-space:nowrap;">跳动</div>
<div style="position:absolute;left:423.70000000000005px;top:387.25px;width:300px;text-align:center;font-size:7px;line-height:7px;color:#303133;font-weight:normal;white-space:nowrap;">110.08+-0.15</div>
<div style="position:absolute;left:469.70000000000005px;top:387.25px;width:300px;text-align:center;font-size:7px;line-height:7px;color:#303133;font-weight:normal;white-space:nowrap;">待检</div>
<div style="position:absolute;left:163.05px;top:387.25px;width:300px;text-align:center;font-size:7px;line-height:7px;color:#303133;font-weight:normal;white-space:nowrap;">2022-12-30</div>
<div style="position:absolute;left:522.3px;top:384.65000000000003px;width:300px;text-align:center;font-size:6.4px;line-height:6.4px;color:#3a7cf0;font-weight:normal;white-space:nowrap;-webkit-text-stroke:0.12px #3a7cf0">修改<span style="display:inline-block;width:3.4px"></span>删除</div>
<div style="position:absolute;left:521.45px;top:393.15000000000003px;width:300px;text-align:center;font-size:6.4px;line-height:6.4px;color:#3a7cf0;font-weight:normal;white-space:nowrap;-webkit-text-stroke:0.12px #3a7cf0">查看报告</div>
<div style="position:absolute;left:574.3px;top:415.4px;width:14.5px;height:13.9px;border:1px solid #ececec;border-radius:2px;box-sizing:border-box;background:#fff;"></div>
<svg style="position:absolute;left:578px;top:419px" width="6" height="7" viewBox="0 0 6 7"><path d="M4 0.8 L1.8 3.5 L4 6.2" fill="none" stroke="#c8c8c8" stroke-width="0.7"/></svg>
<div style="position:absolute;left:593.1px;top:415.4px;width:14.5px;height:13.9px;border:1px solid #409eff;border-radius:2px;box-sizing:border-box;background:#fff;"></div>
<div style="position:absolute;left:450.35px;top:418.9px;width:300px;text-align:center;font-size:7px;line-height:7px;color:#409eff;font-weight:normal;white-space:nowrap;">1</div>
<div style="position:absolute;left:611.3px;top:415.4px;width:14.300000000000068px;height:13.9px;border:1px solid #ececec;border-radius:2px;box-sizing:border-box;background:#fff;"></div>
<div style="position:absolute;left:468.45000000000005px;top:418.9px;width:300px;text-align:center;font-size:7px;line-height:7px;color:#555;font-weight:normal;white-space:nowrap;">2</div>
<div style="position:absolute;left:629.9px;top:415.4px;width:14.5px;height:13.9px;border:1px solid #ececec;border-radius:2px;box-sizing:border-box;background:#fff;"></div>
<div style="position:absolute;left:487.15px;top:418.9px;width:300px;text-align:center;font-size:7px;line-height:7px;color:#555;font-weight:normal;white-space:nowrap;">3</div>
<div style="position:absolute;left:648.5px;top:415.4px;width:14.100000000000023px;height:13.9px;border:1px solid #ececec;border-radius:2px;box-sizing:border-box;background:#fff;"></div>
<div style="position:absolute;left:505.54999999999995px;top:418.9px;width:300px;text-align:center;font-size:7px;line-height:7px;color:#555;font-weight:normal;white-space:nowrap;">4</div>
<div style="position:absolute;left:667.3px;top:415.4px;width:13.900000000000091px;height:13.9px;border:1px solid #ececec;border-radius:2px;box-sizing:border-box;background:#fff;"></div>
<div style="position:absolute;left:524.25px;top:418.9px;width:300px;text-align:center;font-size:7px;line-height:7px;color:#555;font-weight:normal;white-space:nowrap;">5</div>
<div style="position:absolute;left:685.5px;top:415.4px;width:14.299999999999955px;height:13.9px;border:1px solid #ececec;border-radius:2px;box-sizing:border-box;background:#fff;"></div>
<svg style="position:absolute;left:689.5px;top:419px" width="6" height="7" viewBox="0 0 6 7"><path d="M2 0.8 L4.2 3.5 L2 6.2" fill="none" stroke="#777" stroke-width="0.7"/></svg>
</body></html>
